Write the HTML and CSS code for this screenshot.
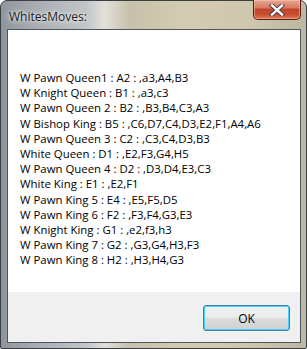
FILE: index.html
```html
<!DOCTYPE html>
<html lang="en">
<head>
  <meta charset="UTF-8">
  <title>WhitesMoves:</title>
  <link rel="stylesheet" href="styles.css">
</head>
<body>

<div class="window">
  <div class="titlebar">
    <span class="title">WhitesMoves:</span>
    <button class="close" aria-label="Close">
      <svg width="16" height="12" viewBox="0 0 16 12">
        <path d="M3 1.5 L13 10.5 M13 1.5 L3 10.5" stroke="#3a3a3a" stroke-width="4.2" stroke-linecap="square"/>
        <path d="M3 1.5 L13 10.5 M13 1.5 L3 10.5" stroke="#ffffff" stroke-width="2.4" stroke-linecap="square"/>
      </svg>
    </button>
  </div>
  <div class="client">
    <div class="message">
      <div>W Pawn Queen1 : A2 : ,a3,A4,B3</div>
      <div>W Knight Queen : B1 : ,a3,c3</div>
      <div>W Pawn Queen 2 : B2 : ,B3,B4,C3,A3</div>
      <div>W Bishop King : B5 : ,C6,D7,C4,D3,E2,F1,A4,A6</div>
      <div>W Pawn Queen 3 : C2 : ,C3,C4,D3,B3</div>
      <div>White Queen : D1 : ,E2,F3,G4,H5</div>
      <div>W Pawn Queen 4 : D2 : ,D3,D4,E3,C3</div>
      <div>White King : E1 : ,E2,F1</div>
      <div>W Pawn King 5 : E4 : ,E5,F5,D5</div>
      <div>W Pawn King 6 : F2 : ,F3,F4,G3,E3</div>
      <div>W Knight King : G1 : ,e2,f3,h3</div>
      <div>W Pawn King 7 : G2 : ,G3,G4,H3,F3</div>
      <div>W Pawn King 8 : H2 : ,H3,H4,G3</div>
    </div>
    <div class="footer">
      <button class="ok">OK</button>
    </div>
  </div>
</div>

</body>
</html>
```

FILE: styles.css
```css
body {
  margin: 0;
  background: #ffffff;
}

.window {
  width: 307px;
  height: 349px;
  box-sizing: border-box;
  border: 1px solid #3b3f44;
  border-radius: 7px 7px 2px 2px;
  padding: 0 5px 5px 6px;
  display: flex;
  flex-direction: column;
  background: linear-gradient(90deg, #8f959c 0%, #a9aeb4 12%, #c3c6c8 28%, #e2e0da 34%, #c7c1ab 42%, #d3ccb2 60%, #cfc8ae 80%, #bdb7a2 100%);
  font-family: "Segoe UI", "Open Sans", "Liberation Sans", sans-serif;
}

.titlebar {
  height: 28px;
  display: flex;
  justify-content: space-between;
  align-items: flex-start;
}

.title {
  font-size: 12px;
  color: #1a1a1a;
  margin: 7px 0 0 2px;
  text-shadow: 0 0 6px rgba(255, 255, 255, 0.9), 0 0 3px rgba(255, 255, 255, 0.9);
}

.close {
  width: 48px;
  height: 20px;
  margin: -1px 0 0 0;
  padding: 0;
  border: 1px solid #5e1a10;
  border-top: none;
  border-radius: 0 0 5px 5px;
  background: linear-gradient(#e6a896 0%, #d77a62 40%, #c3432a 50%, #c84d31 75%, #dc7a58 100%);
  box-shadow: inset 0 0 0 1px rgba(255, 200, 180, 0.5);
  display: flex;
  align-items: center;
  justify-content: center;
}

.client {
  flex: 1;
  border: 1px solid #4d5660;
  display: flex;
  flex-direction: column;
}

.message {
  flex: 1;
  background: #ffffff;
  padding: 40px 0 0 12px;
  font-size: 11.4px;
  line-height: 15.2px;
  color: #000000;
}

.footer {
  height: 50px;
  background: #f0f0f0;
  display: flex;
  justify-content: flex-end;
  align-items: flex-start;
  padding-right: 10px;
}

.ok {
  width: 87px;
  height: 26px;
  margin-top: 13px;
  border: 1px solid #3c7fb1;
  border-radius: 3px;
  background: linear-gradient(#f2f2f2 0%, #ebebeb 50%, #dddddd 51%, #cfcfcf 100%);
  box-shadow: inset 0 0 0 1px #48d1f7;
  font-family: inherit;
  font-size: 12px;
  color: #000000;
  padding: 0;
}
```
